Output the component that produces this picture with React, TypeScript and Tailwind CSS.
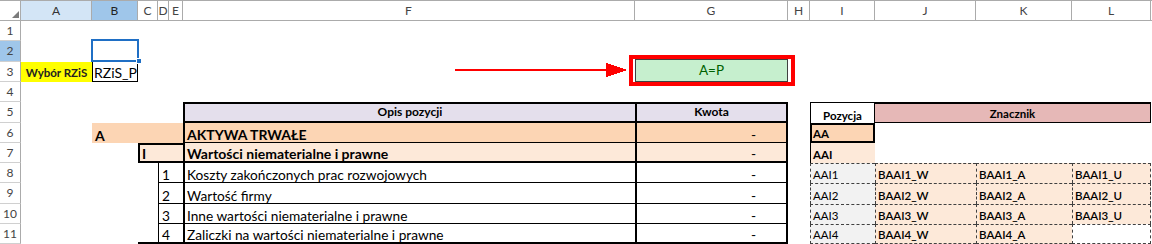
import React from 'react';

// column order: rownum, A, B, C, D, E, F, G, H, I, J, K, L, rest
const headers = [
  { label: 'A', cls: 'col-start-2 bg-[#d3e5f6] text-[#333]' },
  { label: 'B', cls: 'col-start-3 bg-[#9fc6ea] text-[#222]' },
  { label: 'C', cls: 'col-start-4 bg-white text-[#444]' },
  { label: 'D', cls: 'col-start-5 bg-white text-[#444]' },
  { label: 'E', cls: 'col-start-6 bg-white text-[#444]' },
  { label: 'F', cls: 'col-start-7 bg-white text-[#444]' },
  { label: 'G', cls: 'col-start-8 bg-white text-[#444]' },
  { label: 'H', cls: 'col-start-9 bg-white text-[#444]' },
  { label: 'I', cls: 'col-start-10 bg-white text-[#444]' },
  { label: 'J', cls: 'col-start-11 bg-white text-[#444]' },
  { label: 'K', cls: 'col-start-12 bg-white text-[#444]' },
  { label: 'L', cls: 'col-start-13 bg-white text-[#444]' },
];

const rowNums = [
  { n: '1', cls: 'row-start-2 bg-white' },
  { n: '2', cls: 'row-start-3 bg-[#9fc6ea]' },
  { n: '3', cls: 'row-start-4 bg-white' },
  { n: '4', cls: 'row-start-5 bg-white' },
  { n: '5', cls: 'row-start-6 bg-white' },
  { n: '6', cls: 'row-start-7 bg-white' },
  { n: '7', cls: 'row-start-8 bg-white' },
  { n: '8', cls: 'row-start-9 bg-white' },
  { n: '9', cls: 'row-start-10 bg-white' },
  { n: '10', cls: 'row-start-11 bg-white' },
  { n: '11', cls: 'row-start-12 bg-white' },
];

const items = [
  { rs: 'row-start-9', n: '1', text: 'Koszty zakończonych prac rozwojowych', i: 'AAI1', j: 'BAAI1_W', k: 'BAAI1_A', l: 'BAAI1_U', last: false },
  { rs: 'row-start-10', n: '2', text: 'Wartość firmy', i: 'AAI2', j: 'BAAI2_W', k: 'BAAI2_A', l: 'BAAI2_U', last: false },
  { rs: 'row-start-11', n: '3', text: 'Inne wartości niematerialne i prawne', i: 'AAI3', j: 'BAAI3_W', k: 'BAAI3_A', l: 'BAAI3_U', last: false },
  { rs: 'row-start-12', n: '4', text: 'Zaliczki na wartości niematerialne i prawne', i: 'AAI4', j: 'BAAI4_W', k: 'BAAI4_A', l: '', last: true },
];

const cell = 'flex items-end overflow-hidden whitespace-nowrap text-[13.7px] leading-[15px]';
const small = 'flex items-end overflow-hidden whitespace-nowrap text-[11.5px] leading-[14px]';
const dash = 'border-dashed border-[#404040]';

export default function App() {
  return (
    <div className="relative h-[244px] w-[1152px] overflow-hidden bg-white font-[family-name:Lato,'Liberation_Sans',sans-serif] text-black">
      <div className="grid grid-cols-[21px_71px_46px_20px_11px_14px_452px_153px_22px_65px_101px_96px_79px_1fr] grid-rows-[21px_20px_21px_20px_20px_21px_20px_20px_20px_21px_20px_20px]">
        {/* corner */}
        <div className="relative col-start-1 row-start-1 border-t border-r border-b border-[#ababab] bg-white">
          <svg className="absolute right-[1px] bottom-[2px]" width="7" height="7">
            <polygon points="7,0 7,7 0,7" fill="#7b7b7b" />
          </svg>
        </div>
        {headers.map((h) => (
          <div
            key={h.label}
            className={`${h.cls} row-start-1 flex items-center justify-center border-t border-r border-b border-[#ababab] text-[12px]`}
          >
            {h.label}
          </div>
        ))}
        <div className="col-start-14 row-start-1 border-t border-b border-[#ababab]" />
        {rowNums.map((r) => (
          <div
            key={r.n}
            className={`${r.cls} col-start-1 flex items-center justify-center border-r border-b border-r-[#ababab] border-b-[#d0d0d0] text-[12px] text-[#444]`}
          >
            {r.n}
          </div>
        ))}

        {/* row 3 */}
        <div className={`${small} col-start-2 row-start-4 justify-center bg-[#ffff00] pb-[2px] text-[10.5px] font-bold text-[#222]`}>
          Wybór RZiS
        </div>
        <div className={`${cell} col-start-3 row-start-4 border-r border-b border-l border-black pl-[1px] text-[14px] leading-[17px]`}>
          RZiS_P
        </div>
        <div className="col-start-8 row-start-4 -mt-[3px] flex items-center justify-center border border-[#404040] bg-[#c6efce] text-[13.5px] text-[#006100]">
          A=P
        </div>

        {/* row 5 headers */}
        <div className={`${small} col-start-7 row-start-6 justify-center border-t-2 border-b-2 border-l-2 border-black bg-[#e4dfec] pb-[2px] text-[12px] font-bold`}>
          Opis pozycji
        </div>
        <div className={`${small} col-start-8 row-start-6 justify-center border-t-2 border-r-2 border-b-2 border-l-2 border-black bg-[#e4dfec] pb-[2px] text-[12px] font-bold`}>
          Kwota
        </div>
        <div className={`${small} col-start-10 row-start-6 justify-center border-t border-r border-l border-black bg-white font-bold`}>
          Pozycja
        </div>
        <div className={`${small} col-start-11 col-span-3 row-start-6 justify-center border-t-2 border-r border-b border-black bg-[#e6b8b7] pb-[1px] font-bold`}>
          Znacznik
        </div>

        {/* row 6 */}
        <div className={`${cell} col-start-3 col-span-4 row-start-7 bg-[#fcd5b4] px-[3px] text-[14px] font-bold`}>A</div>
        <div className={`${cell} col-start-7 row-start-7 border-b border-l-2 border-black bg-[#fcd5b4] px-[2px] text-[14px] font-bold`}>
          AKTYWA TRWAŁE
        </div>
        <div className={`${cell} col-start-8 row-start-7 justify-end border-r-2 border-b border-l-2 border-black bg-[#fcd5b4] pr-[30px]`}>
          -
        </div>
        <div className={`${small} col-start-10 row-start-7 border-2 border-black bg-[#fcd5b4] px-[1px] font-bold`}>AA</div>

        {/* row 7 */}
        <div className={`${cell} col-start-4 col-span-3 row-start-8 border-t-2 border-b-2 border-l-2 border-black bg-[#fde9d9] px-[2px] text-[14px] font-bold`}>
          I
        </div>
        <div className={`${cell} col-start-7 row-start-8 border-b-2 border-l-2 border-black bg-[#fde9d9] px-[2px] text-[14px] font-bold`}>
          Wartości niematerialne i prawne
        </div>
        <div className={`${cell} col-start-8 row-start-8 justify-end border-r-2 border-b-2 border-l-2 border-black bg-[#fde9d9] pr-[30px]`}>
          -
        </div>
        <div className={`${small} col-start-10 row-start-8 border-l border-black bg-[#fde9d9] px-[2px] pb-[1px] font-bold`}>AAI</div>

        {/* rows 8-11 */}
        <div className="col-start-4 row-start-12 border-b-2 border-black" />
        {items.map((it) => (
          <React.Fragment key={it.n}>
            <div className={`${cell} ${it.rs} col-start-5 col-span-2 border-l border-black px-[3px] ${it.last ? 'border-b-2' : 'border-b'}`}>
              {it.n}
            </div>
            <div className={`${cell} ${it.rs} col-start-7 border-l-2 border-black px-[2px] ${it.last ? 'border-b-2' : 'border-b'}`}>
              {it.text}
            </div>
            <div className={`${cell} ${it.rs} col-start-8 justify-end border-r-2 border-l-2 border-black pr-[30px] ${it.last ? 'border-b-2' : 'border-b'}`}>
              -
            </div>
            <div className={`${small} ${it.rs} col-start-10 border-t border-l ${dash} bg-[#f2f2f2] px-[2px] pb-[1px] ${it.last ? 'border-b' : ''}`}>
              {it.i}
            </div>
            <div className={`${small} ${it.rs} col-start-11 border-t border-l ${dash} bg-[#fde9d9] px-[2px] pb-[1px] font-semibold ${it.last ? 'border-b' : ''}`}>
              {it.j}
            </div>
            <div className={`${small} ${it.rs} col-start-12 border-t border-l ${dash} bg-[#fde9d9] px-[2px] pb-[1px] font-semibold ${it.last ? 'border-b' : ''}`}>
              {it.k}
            </div>
            <div className={`${small} ${it.rs} col-start-13 border-t border-r border-l ${dash} px-[2px] pb-[1px] font-semibold ${it.l ? 'bg-[#fde9d9]' : 'bg-white'} ${it.last ? 'border-b' : ''}`}>
              {it.l}
            </div>
          </React.Fragment>
        ))}
      </div>

      {/* selection on B2 */}
      <div className="pointer-events-none absolute top-[39px] left-[91px] h-[23px] w-[48px] border-2 border-[#1f6fc5]" />
      <div className="pointer-events-none absolute top-[58px] left-[136px] h-[6px] w-[6px] border border-white bg-[#1f6fc5]" />

      {/* red arrow and frame drawn over the sheet */}
      <svg className="pointer-events-none absolute top-[62px] left-[455px]" width="175" height="16" shapeRendering="crispEdges">
        <rect x="0" y="7" width="155" height="2" fill="#ff0000" />
        <polygon points="151,1 172,8 151,15" fill="#ff0000" />
      </svg>
      <div className="pointer-events-none absolute top-[55px] left-[629px] h-[31px] w-[166px] border-4 border-[#ff0000]" />
    </div>
  );
}
